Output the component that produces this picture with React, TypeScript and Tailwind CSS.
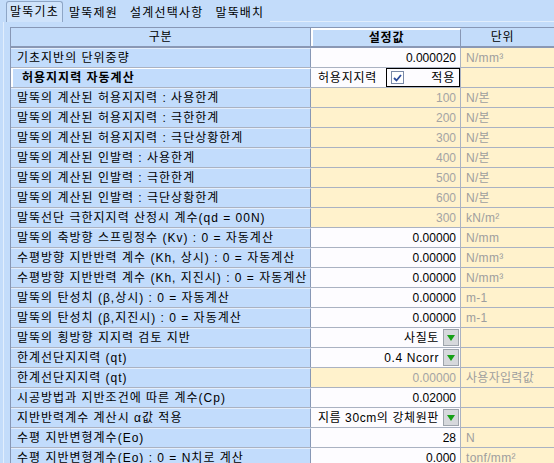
type Kind = "input" | "readonly" | "select" | "check";

interface Row {
  label: string;
  value?: string;
  unit?: string;
  kind: Kind;
  bold?: boolean;
}

const rows: Row[] = [
  { label: "기초지반의 단위중량", value: "0.000020", unit: "N/mm³", kind: "input" },
  { label: "허용지지력 자동계산", kind: "check", bold: true },
  { label: "말뚝의 계산된 허용지지력 : 사용한계", value: "100", unit: "N/본", kind: "readonly" },
  { label: "말뚝의 계산된 허용지지력 : 극한한계", value: "200", unit: "N/본", kind: "readonly" },
  { label: "말뚝의 계산된 허용지지력 : 극단상황한계", value: "300", unit: "N/본", kind: "readonly" },
  { label: "말뚝의 계산된 인발력 : 사용한계", value: "400", unit: "N/본", kind: "readonly" },
  { label: "말뚝의 계산된 인발력 : 극한한계", value: "500", unit: "N/본", kind: "readonly" },
  { label: "말뚝의 계산된 인발력 : 극단상황한계", value: "600", unit: "N/본", kind: "readonly" },
  { label: "말뚝선단 극한지지력 산정시 계수(qd = 00N)", value: "300", unit: "kN/m²", kind: "readonly" },
  { label: "말뚝의 축방향 스프링정수 (Kv) : 0 = 자동계산", value: "0.00000", unit: "N/mm", kind: "input" },
  { label: "수평방향 지반반력 계수 (Kh, 상시) : 0 = 자동계산", value: "0.00000", unit: "N/mm³", kind: "input" },
  { label: "수평방향 지반반력 계수 (Kh, 지진시) : 0 = 자동계산", value: "0.00000", unit: "N/mm³", kind: "input" },
  { label: "말뚝의 탄성치 (β,상시) : 0 = 자동계산", value: "0.00000", unit: "m-1", kind: "input" },
  { label: "말뚝의 탄성치 (β,지진시) : 0 = 자동계산", value: "0.00000", unit: "m-1", kind: "input" },
  { label: "말뚝의 횡방향 지지력 검토 지반", value: "사질토", kind: "select" },
  { label: "한계선단지지력 (qt)", value: "0.4 Ncorr", kind: "select" },
  { label: "한계선단지지력 (qt)", value: "0.00000", unit: "사용자입력값", kind: "readonly" },
  { label: "시공방법과 지반조건에 따른 계수(Cp)", value: "0.02000", kind: "input" },
  { label: "지반반력계수 계산시 α값 적용", value: "지름 30cm의 강체원판", kind: "select" },
  { label: "수평 지반변형계수(Eo)", value: "28", unit: "N", kind: "input" },
  { label: "수평 지반변형계수(Eo) : 0 = N치로 계산", value: "0.000", unit: "tonf/mm²", kind: "input" },
];

const tabs = ["말뚝기초", "말뚝제원", "설계선택사항", "말뚝배치"];

function DropButton() {
  return (
    <span className="ml-[4px] flex h-[17px] w-[16px] shrink-0 items-center justify-center border border-[#9ea4ac] bg-[#d6d8dc]">
      <svg width="8" height="6" viewBox="0 0 8 6">
        <path d="M0 0 L8 0 L4 6 Z" fill="#16a016" />
      </svg>
    </span>
  );
}

function ValueCell({ row }: { row: Row }) {
  if (row.kind === "check") {
    return (
      <div className="flex h-full items-center bg-[#fdfcff] pl-[7px]">
        <span className="w-[68px] tracking-[0.8px] text-black">허용지지력</span>
        <div className="flex h-[19px] flex-1 items-center border border-black bg-[#fdfcff] pl-[4px] pr-[4px]">
          <span className="flex h-[13px] w-[13px] items-center justify-center border border-[#7a8aa8] bg-white">
            <svg width="9" height="8" viewBox="0 0 9 8">
              <path d="M1 4 L3.5 6.5 L8 1" stroke="#2a4a9a" strokeWidth="1.8" fill="none" />
            </svg>
          </span>
          <span className="ml-auto tracking-[0.8px] text-black">적용</span>
        </div>
      </div>
    );
  }
  if (row.kind === "select") {
    return (
      <div className="flex h-full items-center justify-end bg-[#fdfcff] pr-[1px]">
        <span className="tracking-[0.6px] text-black">{row.value}</span>
        <DropButton />
      </div>
    );
  }
  const readonly = row.kind === "readonly";
  return (
    <div
      className={`flex h-full items-center justify-end pr-[4px] ${
        readonly ? "bg-[#fff2cc] text-[#a4a4a4]" : "bg-[#fdfcff] text-black"
      }`}
    >
      {row.value}
    </div>
  );
}

export default function App() {
  return (
    <div
      className="relative h-[463px] w-[554px] overflow-hidden bg-[#c3dcfa] text-[12px] leading-none"
      style={{ fontFamily: '"Liberation Sans", "Noto Sans CJK KR", sans-serif' }}
    >
      {/* tab strip */}
      <div className="flex h-[22px] items-end pl-[6px] tracking-[1.2px]">
        {tabs.map((t, i) => (
          <div
            key={t}
            className={
              i === 0
                ? "flex h-[21px] items-center rounded-t-[3px] border border-b-0 border-[#8ea6c6] bg-[#cfe3fb] px-[3px]"
                : "flex h-[19px] items-center px-[6px]"
            }
          >
            {t}
          </div>
        ))}
        <div className="flex-1 border-b border-[#e2eefc]" />
      </div>

      {/* tab panel */}
      <div className="ml-[3px] h-full border-l border-[#e2eefc] pl-[6px] pt-[5px]">
        <div className="border-l border-t border-[#8797b5]">
          {/* header */}
          <div className="grid h-[20px] grid-cols-[300px_150px_1fr] border-b-2 border-[#8a98b4]">
            <div className="flex items-center justify-center border-r border-[#8797b5] bg-[#c3dcfa] tracking-[0.8px]">
              구분
            </div>
            <div className="flex items-center justify-center border-r border-[#8797b5] border-l-2 border-t-2 border-l-white border-t-white bg-[#c3dcfa] font-bold tracking-[0.8px]">
              설정값
            </div>
            <div className="flex items-center justify-center bg-[#c3dcfa] pr-[10px] tracking-[0.8px]">단위</div>
          </div>

          {rows.map((row, i) => (
            <div key={i} className="grid h-[20px] grid-cols-[300px_150px_1fr] border-b border-[#aab2c2]">
              <div
                className={`flex items-center whitespace-nowrap border-r border-[#8797b5] tracking-[1px] ${
                  row.bold
                    ? "border-l-2 border-t border-l-white border-t-white pl-[9px] font-bold"
                    : "border-t border-t-[#e4eefc] pl-[6px]"
                } bg-[#c2dcfc] text-black`}
              >
                {row.label}
              </div>
              <div className="border-r border-[#aab2c2]">
                <ValueCell row={row} />
              </div>
              <div className="flex items-center bg-[#fff2cc] pl-[5px] text-[#9e9e9e] tracking-[0.3px]">{row.unit}</div>
            </div>
          ))}
        </div>
      </div>
    </div>
  );
}
